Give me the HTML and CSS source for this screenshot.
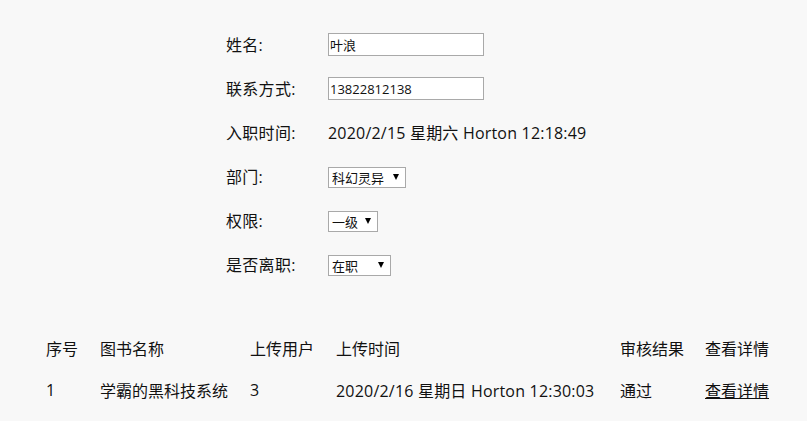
FILE: index.html
```html
<!DOCTYPE html>
<html lang="zh">
<head>
<meta charset="utf-8">
<link rel="stylesheet" href="styles.css">
</head>
<body>
<div class="page">
  <form class="form">
    <div class="row"><label class="lbl">姓名:</label><input class="txt" type="text" value="叶浪"></div>
    <div class="row"><label class="lbl">联系方式:</label><input class="txt" type="text" value="13822812138"></div>
    <div class="row"><label class="lbl">入职时间:</label><span class="val">2020/2/15 星期六 Horton 12:18:49</span></div>
    <div class="row"><label class="lbl">部门:</label><span class="sel w78"><select><option>科幻灵异</option></select></span></div>
    <div class="row"><label class="lbl">权限:</label><span class="sel w50"><select><option>一级</option></select></span></div>
    <div class="row"><label class="lbl">是否离职:</label><span class="sel w63"><select><option>在职</option></select></span></div>
  </form>
  <div class="table">
    <div class="cell">序号</div><div class="cell">图书名称</div><div class="cell">上传用户</div><div class="cell">上传时间</div><div class="cell">审核结果</div><div class="cell">查看详情</div>
    <div class="cell">1</div><div class="cell">学霸的黑科技系统</div><div class="cell">3</div><div class="cell val">2020/2/16 星期日 Horton 12:30:03</div><div class="cell">通过</div><div class="cell"><a href="#" class="link">查看详情</a></div>
  </div>
</div>
</body>
</html>
```
FILE: styles.css
```css
html, body { margin: 0; padding: 0; background: #f8f8f8; }
body {
  font-family: "Segoe UI", "Open Sans", "Noto Sans CJK SC", sans-serif;
  font-size: 16px;
  color: #111;
}
.page { padding-top: 22px; }
.form { margin-left: 226px; display: flex; flex-direction: column; }
.row { display: flex; align-items: center; height: 44px; }
.lbl { width: 102px; letter-spacing: 0.3px; }
.val { letter-spacing: 0.2px; }
.txt {
  box-sizing: border-box; width: 156px; height: 23px; margin: 0;
  border: 1px solid #a9a9a9; background: #fff; padding: 1px 1px 0;
  font-family: "Segoe UI", "Open Sans", "Noto Sans CJK SC", sans-serif;
  font-size: 13px; color: #111;
}
.sel { position: relative; display: inline-block; height: 21px; }
.sel select {
  appearance: none; -webkit-appearance: none; box-sizing: border-box;
  width: 100%; height: 21px; margin: 0; border: 1px solid #a9a9a9; border-radius: 0;
  background: #fff; padding: 0 0 0 3px;
  font-family: "Noto Sans CJK SC", sans-serif; font-size: 13px; color: #111;
}
.sel::after {
  content: ""; position: absolute; right: 7px; top: 8px;
  border-left: 3px solid transparent; border-right: 3px solid transparent; border-top: 6px solid #000;
  pointer-events: none;
}
.w78 { width: 78px; }
.w50 { width: 50px; }
.w63 { width: 63px; }
.table {
  margin-top: 41px; margin-left: 46px;
  display: grid;
  grid-template-columns: 54px 150px 86px 284px 85px auto;
  grid-auto-rows: 42px;
  align-items: center;
  white-space: nowrap;
}
.link { color: #111; text-decoration: underline; }
```
